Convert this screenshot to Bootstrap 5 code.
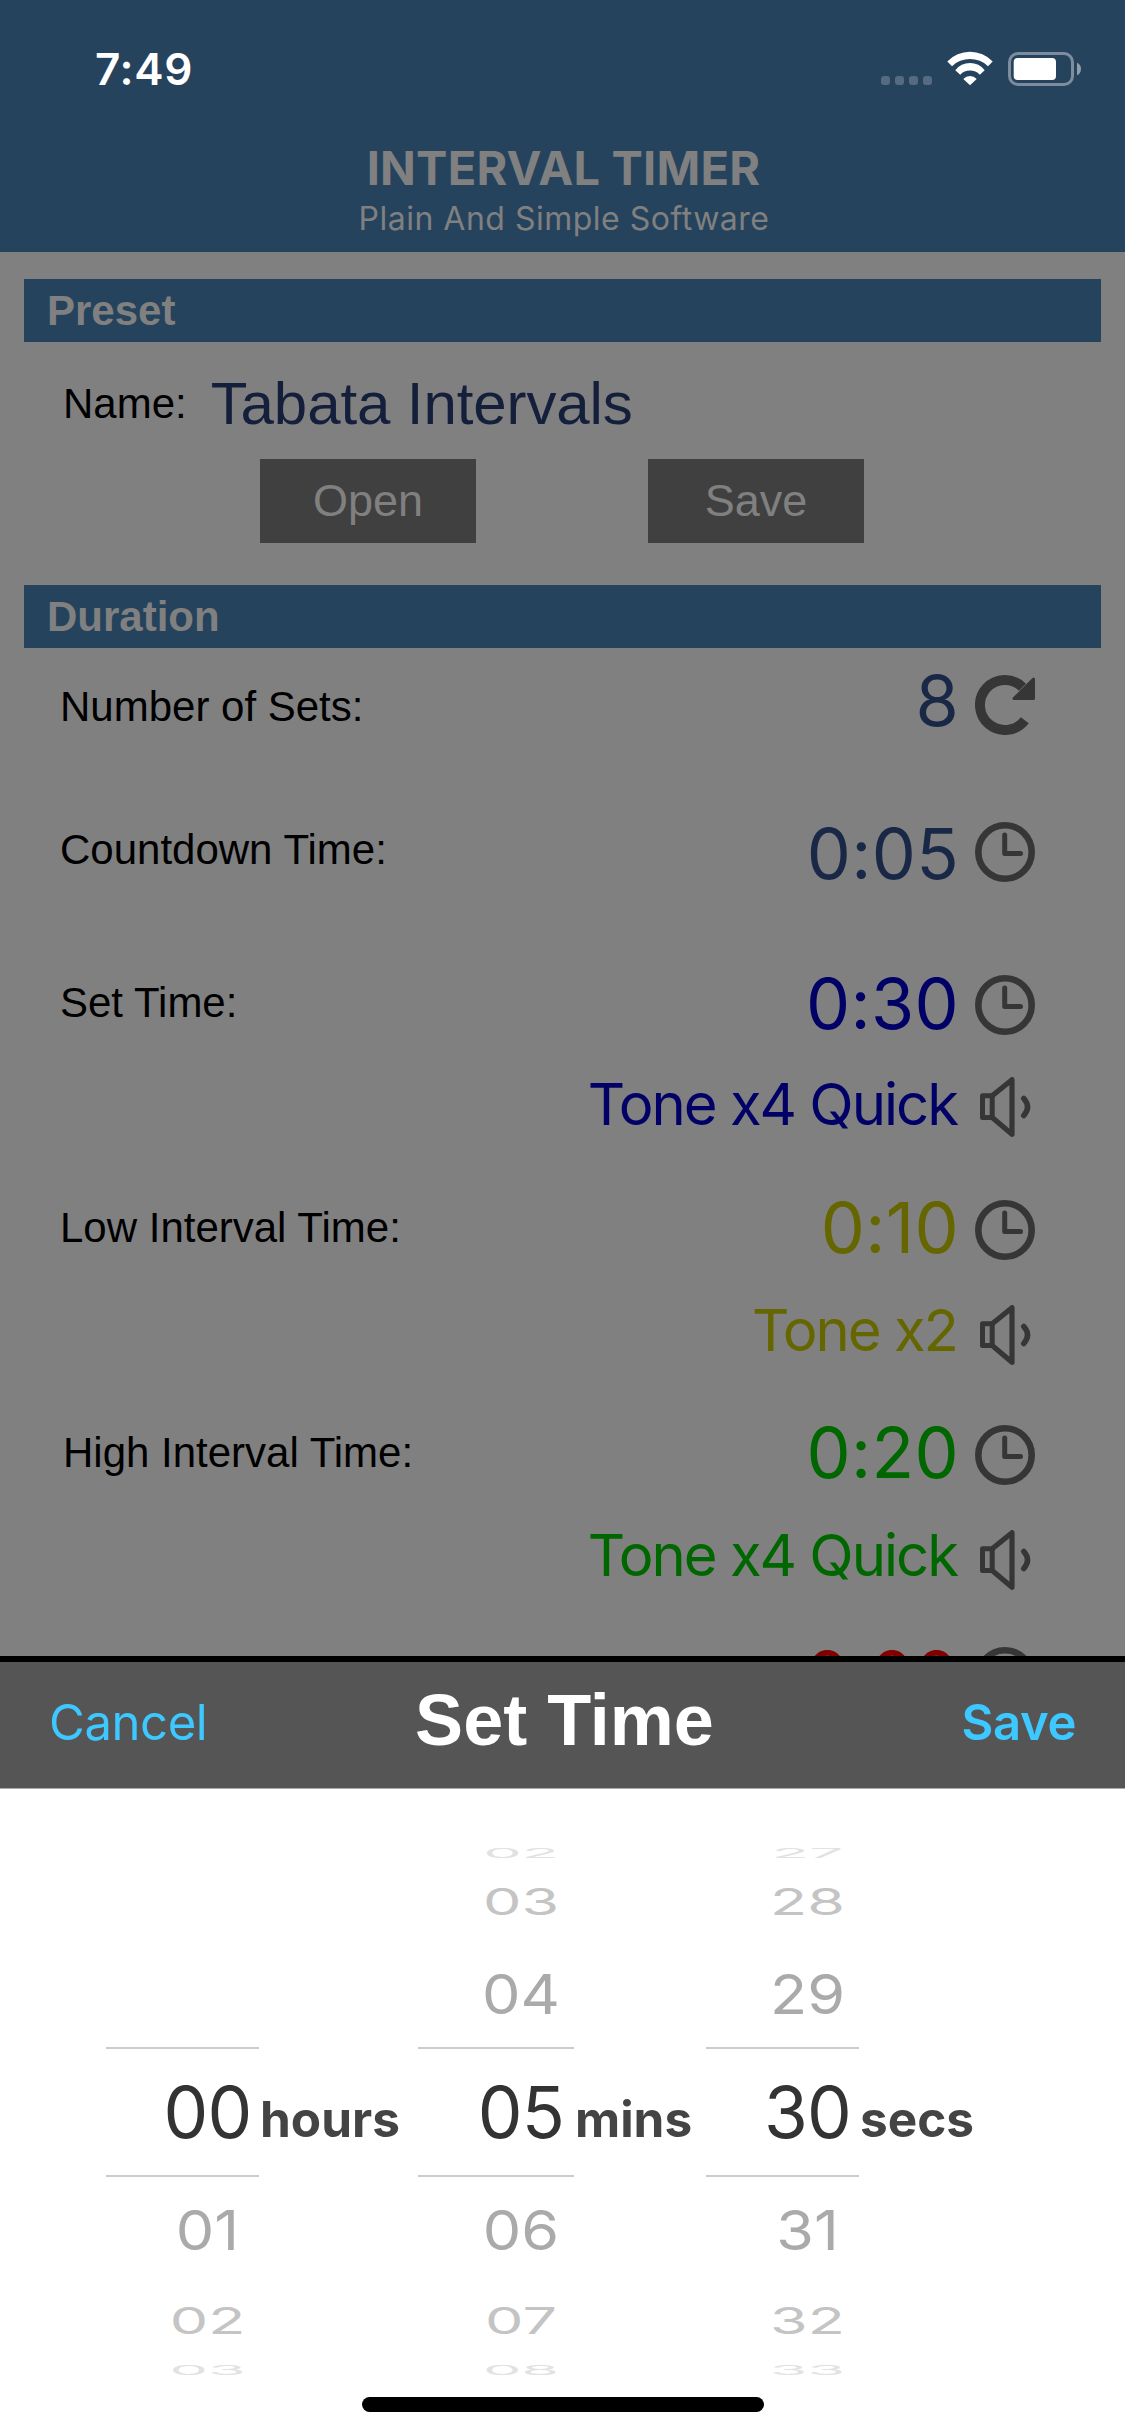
<!DOCTYPE html>
<html lang="en">
<head>
<meta charset="utf-8">
<meta name="viewport" content="width=device-width, initial-scale=1">
<title>Interval Timer</title>
<link rel="stylesheet" href="https://cdn.jsdelivr.net/npm/bootstrap@5.3.0/dist/css/bootstrap.min.css">
<style>
  body { font-family: Inter, "Liberation Sans", sans-serif; background: #fff; line-height: 1; width: 1125px; height: 2436px; overflow: hidden; }
  .helv { font-family: "Liberation Sans", Arial, sans-serif; }
  .app-screen { height: 1656px; background: #808080; }
  .app-header { height: 252px; background: #26435d; color: #808080; }
  .status-row { height: 138px; padding: 0 44px 0 95px; color: #fff; }
  .clock-text { font-size: 44px; font-weight: 600; letter-spacing: .7px; }
  .app-title { font-size: 47px; font-weight: 700; line-height: 60px; letter-spacing: .2px; padding-left: 2px; }
  .app-sub { font-size: 32px; line-height: 42px; letter-spacing: .5px; padding-left: 3px; }
  .section-bar { margin: 0 24px; height: 63px; padding-left: 23px; background: #26435d; color: #808080; font-size: 42px; font-weight: 700; }
  .name-row { height: 86px; padding: 37px 0 0 63px; color: #000; font-size: 42px; }
  .preset-name { font-size: 60px; color: #141f3c; margin-left: 24px; letter-spacing: -.1px; }
  .preset-btn { width: 216px; height: 84px; font-size: 45px; background: #404040 !important; color: #808080 !important; }
  .set-row { height: 60px; margin-top: var(--gap); padding: 0 90px 0 60px; }
  .set-label { font-size: 42px; color: #000; }
  .set-value { font-size: 70px; letter-spacing: .3px; padding-bottom: var(--lift, 0); margin-right: 16px; }
  .set-tone { font-size: 58px; letter-spacing: -2px; padding-bottom: var(--lift, 0); margin-right: 18px; }
  .ic { width: 60px; height: 60px; flex: none; fill: none; stroke: #363636; }
  .c-navy { color: #1a2847; } .c-blue { color: #000066; } .c-olive { color: #666600; }
  .c-green { color: #006600; } .c-red { color: #800000; }
  .sheet-bar { height: 133px; border-top: 6px solid #000; border-bottom: 1px solid #aaa; background: #555; padding: 0 49px 6px; }
  .sheet-act { font-size: 49px; letter-spacing: -.4px; color: #3dc8ff !important; flex: 1 1 0; }
  .sheet-title { font-size: 72px; color: #fff; font-weight: 700; padding-left: 4px; padding-bottom: 5px; }
  .picker { height: 593px; padding: 54px 0 0 106px; }
  .wheel > div { padding-left: 50px; font-size: 61px; }
  .wheel span { display: block; }
  .w3 { height: 21px; color: #e2e2e2; } .w3 span { transform: scaleY(.22); }
  .w2 { height: 77px; color: #c4c4c4; } .w2 span { transform: scaleY(.6); }
  .w1 { height: 106px; color: #aaa; } .w1 span { transform: scaleY(.91); }
  .wheel > .w0 { height: 130px; border-top: 2px solid #ccc; border-bottom: 2px solid #ccc; color: #333; font-size: 71px; font-weight: 400; letter-spacing: -.8px; }
  .wheel-a { width: 153px; } .wheel-b { width: 156px; }
  .unit { margin-top: 204px; height: 130px; padding: 16px 0 0 1px; font-size: 49.5px; font-weight: 700; letter-spacing: 0; color: #444; }
  .home-bar { width: 402px; height: 15px; border-radius: 8px; background: #000; margin: 15px 0 0 362px; }
</style>
</head>
<body>
<svg width="0" height="0" class="d-none">
  <symbol id="clock" viewBox="0 0 60 60"><circle cx="30" cy="30" r="26.7" stroke-width="6.6"/><path d="M29.7 13V31.5H45.5" stroke-width="5" stroke-linecap="round" stroke-linejoin="round"/></symbol>
  <symbol id="speaker" viewBox="0 0 60 60"><path d="M7.5 18.8H17.2V40.6H7.5Z" stroke-width="5" stroke-linejoin="round"/><path d="M17.2 18.8L37 2.7V57.3L17.2 40.6" stroke-width="5.2" stroke-linejoin="round"/><path d="M48.7 21.4Q56.4 30 48.7 38.6" stroke-width="5.4" stroke-linecap="round"/></symbol>
  <symbol id="reload" viewBox="0 0 60 60"><path d="M49.8 45.2A25 25 0 1 1 47.5 12.2" stroke-width="10"/><path d="M58.5 4V23.5H39Z" fill="#363636" stroke-width="3" stroke-linejoin="round"/></symbol>
</svg>

<main class="app-screen overflow-hidden">
  <header class="app-header text-center">
    <div class="status-row d-flex justify-content-between align-items-center">
      <span class="clock-text">7:49</span>
      <svg width="200" height="36" viewBox="0 0 200 36" fill="#fff">
        <g fill="#566a80"><rect y="25" width="9" height="9" rx="3"/><rect x="14" y="25" width="9" height="9" rx="3"/><rect x="28" y="25" width="9" height="9" rx="3"/><rect x="42" y="25" width="9" height="9" rx="3"/></g>
        <g transform="translate(66 .7)"><path d="M.3 9.7A31.4 31.4 0 0 1 45.7 9.7L41 14.5A26 26 0 0 0 5 14.5Z"/><path d="M8.3 18.6A18.3 18.3 0 0 1 37.7 18.6L32.8 23A13.5 13.5 0 0 0 13.2 23Z"/><path d="M16.3 27.2A9.3 9.3 0 0 1 29.7 27.2L23 33.6Z"/></g>
        <rect x="128.500" y="2.500" width="63" height="31" rx="8.500" fill="none" stroke="#7d8d9d" stroke-width="3"/>
        <rect x="132.700" y="7" width="42.300" height="22" rx="4"/>
        <path d="M196 11.700Q200 13.500 200 18T196 24.300Z" fill="#8f9dab"/>
      </svg>
    </div>
    <div class="app-title">INTERVAL TIMER</div>
    <div class="app-sub">Plain And Simple Software</div>
  </header>

  <div class="section-bar helv d-flex align-items-center" style="margin-top:27px">Preset</div>
  <div class="name-row helv d-flex align-items-center"><span>Name:</span><span class="preset-name">Tabata Intervals</span></div>
  <div class="d-flex helv" style="padding:31px 0 42px 260px;gap:172px">
    <button class="btn preset-btn rounded-0 border-0 p-0">Open</button>
    <button class="btn preset-btn rounded-0 border-0 p-0">Save</button>
  </div>
  <div class="section-bar helv d-flex align-items-center">Duration</div>

  <div class="set-row d-flex align-items-center" style="--gap:27px;--lift:9px"><span class="set-label helv me-auto pt-1">Number of Sets:</span><span class="set-value c-navy">8</span><svg class="ic"><use href="#reload"/></svg></div>
  <div class="set-row d-flex align-items-center" style="--gap:87px"><span class="set-label helv me-auto pb-1">Countdown Time:</span><span class="set-value c-navy pt-1">0:05</span><svg class="ic"><use href="#clock"/></svg></div>
  <div class="set-row d-flex align-items-center" style="--gap:93px;--lift:3px"><span class="set-label helv me-auto pb-1">Set Time:</span><span class="set-value c-blue">0:30</span><svg class="ic"><use href="#clock"/></svg></div>
  <div class="set-row d-flex align-items-center justify-content-end" style="--gap:42px;--lift:6px"><span class="set-tone c-blue">Tone x4 Quick</span><svg class="ic"><use href="#speaker"/></svg></div>
  <div class="set-row d-flex align-items-center" style="--gap:63px;--lift:5px"><span class="set-label helv me-auto pb-1">Low Interval Time:</span><span class="set-value c-olive">0:10</span><svg class="ic"><use href="#clock"/></svg></div>
  <div class="set-row d-flex align-items-center justify-content-end" style="--gap:45px;--lift:11px"><span class="set-tone c-olive">Tone x2</span><svg class="ic"><use href="#speaker"/></svg></div>
  <div class="set-row d-flex align-items-center" style="--gap:60px;--lift:5px;padding-left:63px"><span class="set-label helv me-auto pb-1">High Interval Time:</span><span class="set-value c-green">0:20</span><svg class="ic"><use href="#clock"/></svg></div>
  <div class="set-row d-flex align-items-center justify-content-end" style="--gap:45px;--lift:11px"><span class="set-tone c-green">Tone x4 Quick</span><svg class="ic"><use href="#speaker"/></svg></div>
  <div class="set-row d-flex align-items-center justify-content-end" style="--gap:57px"><span class="set-value c-red">0:00</span><svg class="ic"><use href="#clock"/></svg></div>
</main>

<section>
  <div class="sheet-bar d-flex align-items-center">
    <a class="sheet-act text-decoration-none">Cancel</a>
    <span class="sheet-title helv">Set Time</span>
    <a class="sheet-act text-decoration-none text-end fw-semibold">Save</a>
  </div>
  <div class="picker d-flex align-items-start text-center">
    <div class="wheel wheel-a">
      <div class="w3"></div><div class="w2"></div><div class="w1"></div>
      <div class="w0 d-flex align-items-center justify-content-center"><span>00</span></div>
      <div class="w1 d-flex align-items-center justify-content-center"><span>01</span></div>
      <div class="w2 d-flex align-items-center justify-content-center"><span>02</span></div>
      <div class="w3 d-flex align-items-center justify-content-center"><span>03</span></div>
    </div>
    <div class="unit d-flex align-items-center" style="width:159px">hours</div>
    <div class="wheel wheel-b">
      <div class="w3 d-flex align-items-center justify-content-center"><span>02</span></div>
      <div class="w2 d-flex align-items-center justify-content-center"><span>03</span></div>
      <div class="w1 d-flex align-items-center justify-content-center"><span>04</span></div>
      <div class="w0 d-flex align-items-center justify-content-center"><span>05</span></div>
      <div class="w1 d-flex align-items-center justify-content-center"><span>06</span></div>
      <div class="w2 d-flex align-items-center justify-content-center"><span>07</span></div>
      <div class="w3 d-flex align-items-center justify-content-center"><span>08</span></div>
    </div>
    <div class="unit d-flex align-items-center" style="width:132px">mins</div>
    <div class="wheel wheel-a">
      <div class="w3 d-flex align-items-center justify-content-center"><span>27</span></div>
      <div class="w2 d-flex align-items-center justify-content-center"><span>28</span></div>
      <div class="w1 d-flex align-items-center justify-content-center"><span>29</span></div>
      <div class="w0 d-flex align-items-center justify-content-center"><span>30</span></div>
      <div class="w1 d-flex align-items-center justify-content-center"><span>31</span></div>
      <div class="w2 d-flex align-items-center justify-content-center"><span>32</span></div>
      <div class="w3 d-flex align-items-center justify-content-center"><span>33</span></div>
    </div>
    <div class="unit d-flex align-items-center">secs</div>
  </div>
  <div class="home-bar"></div>
</section>
<script src="https://cdn.jsdelivr.net/npm/bootstrap@5.3.0/dist/js/bootstrap.bundle.min.js"></script>
</body>
</html>
